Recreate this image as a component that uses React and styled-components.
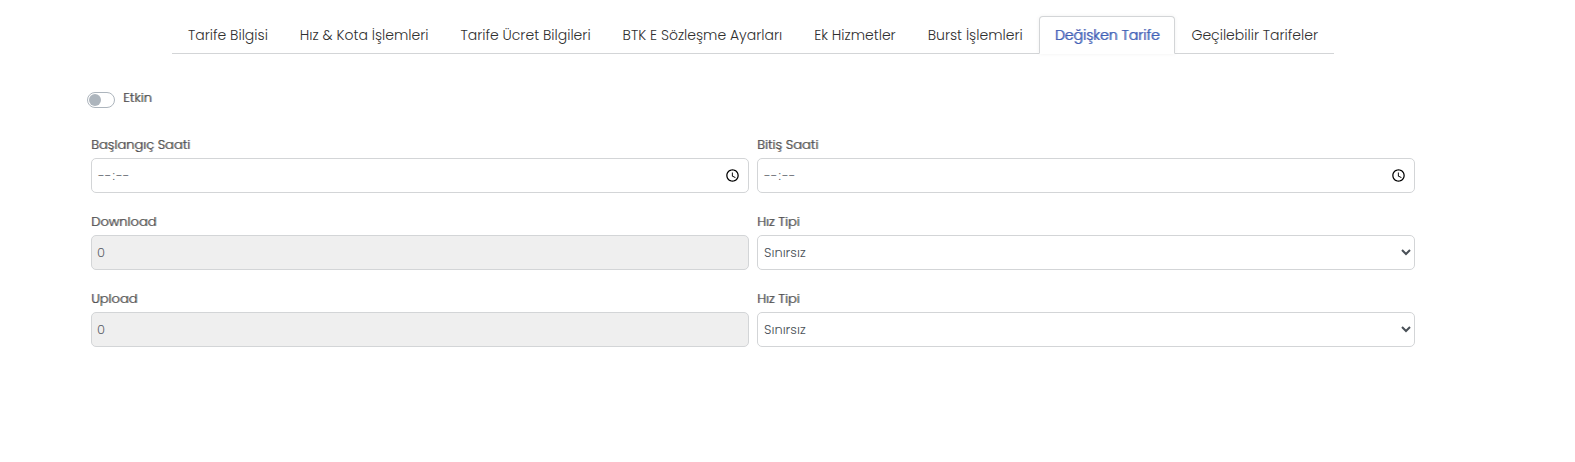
import React, { useState } from "react";
import styled, { createGlobalStyle } from "styled-components";

const GlobalStyle = createGlobalStyle`
  *, *::before, *::after { box-sizing: border-box; }
  body {
    margin: 0;
    background: #fff;
    color: #6a6a6a;
    font-family: Poppins, Inter, "Liberation Sans", sans-serif;
    font-size: 14px;
    line-height: 20px;
  }
`;

const Page = styled.main`
  padding: 16px 156px 112px 87px;
`;

const TabList = styled.nav`
  display: flex;
  width: fit-content;
  margin: 0 auto;
  border-bottom: 1px solid #d3d5d7;
`;

const Tab = styled.button`
  height: 38px;
  margin: 0 0 -1px;
  padding: 0 15px;
  border: 1px solid ${(p) => (p.$active ? "#d3d5d7" : "transparent")};
  border-bottom-color: ${(p) => (p.$active ? "#fff" : "transparent")};
  border-radius: 4px 4px 0 0;
  background: ${(p) => (p.$active ? "#fff" : "transparent")};
  box-shadow: ${(p) => (p.$active ? "0 0 4px rgba(0, 0, 0, 0.06)" : "none")};
  color: ${(p) => (p.$active ? "#3f5fb5" : "#2f2f2f")};
  font: inherit;
  font-weight: 300;
  text-shadow: ${(p) => (p.$active ? "1px 0 0 rgba(63, 95, 181, 0.7)" : "none")};
  white-space: nowrap;
  cursor: pointer;
`;

const SwitchRow = styled.div`
  display: flex;
  gap: 8px;
  margin-top: 34px;
`;

const Switch = styled.input`
  appearance: none;
  width: 28px;
  height: 16px;
  margin: 4px 0 0;
  padding: 1px;
  border: 1px solid #adb5bd;
  border-radius: 8px;
  background: #fff;

  &::before {
    content: "";
    display: block;
    width: 12px;
    height: 12px;
    border-radius: 50%;
    background: #adb5bd;
  }

  &:checked::before {
    margin-left: 12px;
    background: #3f5fb5;
  }
`;

const Label = styled.label`
  font-size: 13px;
  font-weight: 300;
  line-height: 20px;
  color: #505050;
  text-shadow: 1px 0 0 rgba(80, 80, 80, 0.6);
`;

const Fields = styled.div`
  display: grid;
  grid-template-columns: 1fr 1fr;
  gap: 19px 8px;
  margin-top: 27px;
  padding: 0 4px;
`;

const Field = styled.div`
  display: flex;
  flex-direction: column;
  gap: 3px;
  min-width: 0;
`;

const Control = styled.input`
  width: 100%;
  height: 35px;
  padding: 0 5px;
  border: 1px solid #d3d5d7;
  border-radius: 5px;
  background: #fff;
  color: #5a6067;
  font: inherit;
  font-size: 13px;
  font-weight: 300;

  &:disabled {
    background: #efefef;
  }
`;

const TimeControl = styled(Control)`
  &::-webkit-datetime-edit-ampm-field {
    display: none;
  }

  &::-webkit-calendar-picker-indicator {
    width: 15px;
    height: 15px;
  }
`;

const SelectControl = styled(Control).attrs({ as: "select" })`
  padding: 0 3px 0 2px;
  color: #495057;
`;

const tabs = [
  "Tarife Bilgisi",
  "Hız & Kota İşlemleri",
  "Tarife Ücret Bilgileri",
  "BTK E Sözleşme Ayarları",
  "Ek Hizmetler",
  "Burst İşlemleri",
  "Değişken Tarife",
  "Geçilebilir Tarifeler",
];

function TimeField({ id, label }) {
  return (
    <Field>
      <Label htmlFor={id}>{label}</Label>
      <TimeControl id={id} type="time" />
    </Field>
  );
}

function SpeedFields({ id, label }) {
  return (
    <>
      <Field>
        <Label htmlFor={id}>{label}</Label>
        <Control id={id} type="text" defaultValue="0" disabled />
      </Field>
      <Field>
        <Label htmlFor={`${id}-type`}>Hız Tipi</Label>
        <SelectControl id={`${id}-type`}>
          <option>Sınırsız</option>
        </SelectControl>
      </Field>
    </>
  );
}

export default function App() {
  const [active, setActive] = useState("Değişken Tarife");
  return (
    <>
      <GlobalStyle />
      <Page lang="tr">
        <TabList role="tablist">
          {tabs.map((tab) => (
            <Tab
              key={tab}
              type="button"
              role="tab"
              aria-selected={tab === active}
              $active={tab === active}
              onClick={() => setActive(tab)}
            >
              {tab}
            </Tab>
          ))}
        </TabList>
        <form>
          <SwitchRow>
            <Switch id="enabled" type="checkbox" />
            <Label htmlFor="enabled">Etkin</Label>
          </SwitchRow>
          <Fields>
            <TimeField id="start" label="Başlangıç Saati" />
            <TimeField id="end" label="Bitiş Saati" />
            <SpeedFields id="download" label="Download" />
            <SpeedFields id="upload" label="Upload" />
          </Fields>
        </form>
      </Page>
    </>
  );
}
